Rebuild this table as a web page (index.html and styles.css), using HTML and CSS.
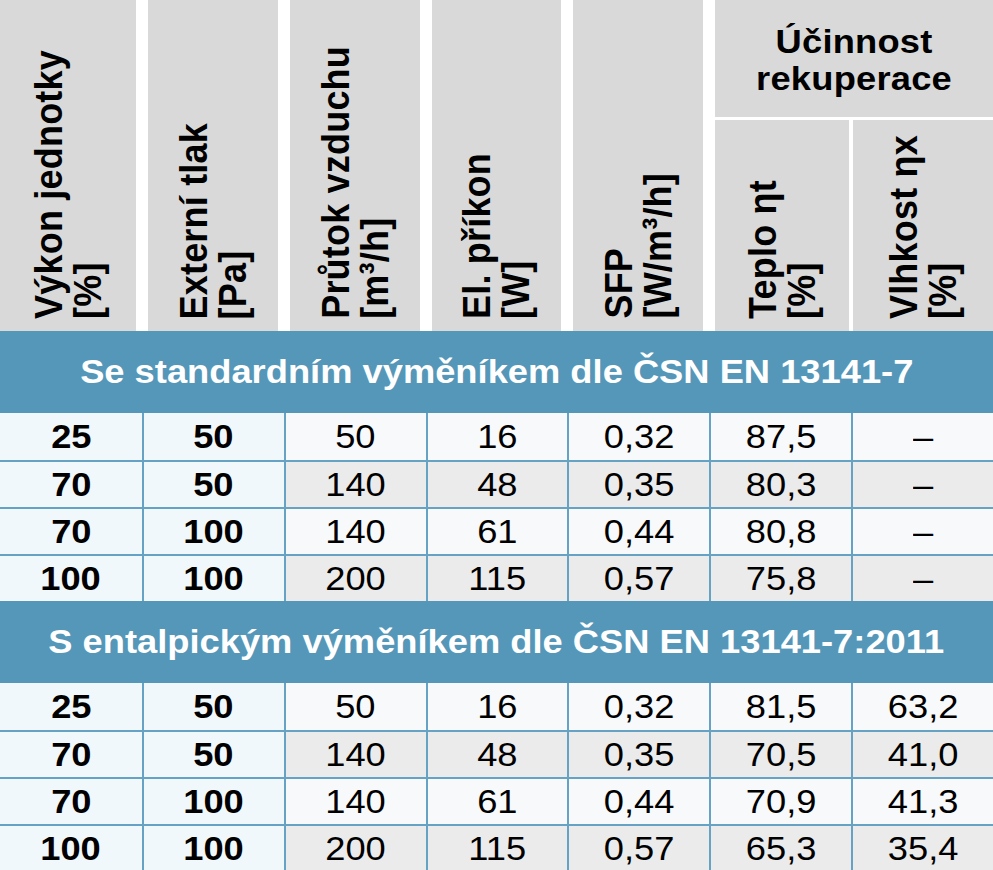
FILE: index.html
```html
<!DOCTYPE html>
<html lang="cs">
<head>
<meta charset="utf-8">
<title>Parametry jednotky</title>
<link rel="stylesheet" href="styles.css">
</head>
<body>
<div class="spec">
  <div class="thead">
    <div class="th th-main c1"><span class="vt">Výkon jednotky<br>[%]</span></div>
    <div class="th th-main c2"><span class="vt">Externí tlak<br>[Pa]</span></div>
    <div class="th th-main c3"><span class="vt">Průtok vzduchu<br>[m³/h]</span></div>
    <div class="th th-main c4"><span class="vt">El. příkon<br>[W]</span></div>
    <div class="th th-main c5"><span class="vt">SFP<br>[W/m³/h]</span></div>
    <div class="th th-group"><span class="ht">Účinnost<br>rekuperace</span></div>
    <div class="th th-sub th-sub-a"><span class="vt">Teplo ηt<br>[%]</span></div>
    <div class="th th-sub th-sub-b"><span class="vt">Vlhkost ηx<br>[%]</span></div>
  </div>

  <div class="band"><span class="t">Se standardním výměníkem dle ČSN EN 13141-7</span></div>
  <div class="row odd">
    <div class="c key"><span class="t">25</span></div><div class="c key"><span class="t">50</span></div>
    <div class="c val"><span class="t">50</span></div><div class="c val"><span class="t">16</span></div>
    <div class="c val"><span class="t">0,32</span></div><div class="c val"><span class="t">87,5</span></div>
    <div class="c val"><span class="t">–</span></div>
  </div>
  <div class="row even">
    <div class="c key"><span class="t">70</span></div><div class="c key"><span class="t">50</span></div>
    <div class="c val"><span class="t">140</span></div><div class="c val"><span class="t">48</span></div>
    <div class="c val"><span class="t">0,35</span></div><div class="c val"><span class="t">80,3</span></div>
    <div class="c val"><span class="t">–</span></div>
  </div>
  <div class="row odd">
    <div class="c key"><span class="t">70</span></div><div class="c key"><span class="t">100</span></div>
    <div class="c val"><span class="t">140</span></div><div class="c val"><span class="t">61</span></div>
    <div class="c val"><span class="t">0,44</span></div><div class="c val"><span class="t">80,8</span></div>
    <div class="c val"><span class="t">–</span></div>
  </div>
  <div class="row even">
    <div class="c key"><span class="t">100</span></div><div class="c key"><span class="t">100</span></div>
    <div class="c val"><span class="t">200</span></div><div class="c val"><span class="t">115</span></div>
    <div class="c val"><span class="t">0,57</span></div><div class="c val"><span class="t">75,8</span></div>
    <div class="c val"><span class="t">–</span></div>
  </div>

  <div class="band"><span class="t">S entalpickým výměníkem dle ČSN EN 13141-7:2011</span></div>
  <div class="row odd">
    <div class="c key"><span class="t">25</span></div><div class="c key"><span class="t">50</span></div>
    <div class="c val"><span class="t">50</span></div><div class="c val"><span class="t">16</span></div>
    <div class="c val"><span class="t">0,32</span></div><div class="c val"><span class="t">81,5</span></div>
    <div class="c val"><span class="t">63,2</span></div>
  </div>
  <div class="row even">
    <div class="c key"><span class="t">70</span></div><div class="c key"><span class="t">50</span></div>
    <div class="c val"><span class="t">140</span></div><div class="c val"><span class="t">48</span></div>
    <div class="c val"><span class="t">0,35</span></div><div class="c val"><span class="t">70,5</span></div>
    <div class="c val"><span class="t">41,0</span></div>
  </div>
  <div class="row odd">
    <div class="c key"><span class="t">70</span></div><div class="c key"><span class="t">100</span></div>
    <div class="c val"><span class="t">140</span></div><div class="c val"><span class="t">61</span></div>
    <div class="c val"><span class="t">0,44</span></div><div class="c val"><span class="t">70,9</span></div>
    <div class="c val"><span class="t">41,3</span></div>
  </div>
  <div class="row even">
    <div class="c key"><span class="t">100</span></div><div class="c key"><span class="t">100</span></div>
    <div class="c val"><span class="t">200</span></div><div class="c val"><span class="t">115</span></div>
    <div class="c val"><span class="t">0,57</span></div><div class="c val"><span class="t">65,3</span></div>
    <div class="c val"><span class="t">35,4</span></div>
  </div>
</div>
</body>
</html>
```

FILE: styles.css
```css
* { box-sizing: border-box; }

html, body {
  margin: 0;
  padding: 0;
  background: #ffffff;
}

body {
  font-family: "Liberation Sans", Arial, Helvetica, sans-serif;
  color: #000;
  overflow: hidden;
}

.spec {
  width: 993px;
}

/* ---------- header ---------- */
.thead {
  display: grid;
  grid-template-columns: repeat(7, 1fr);
  grid-template-rows: 120px 211px;
  height: 331px;
}

.th {
  background: #d9d9d9;
  border: 0 solid #ffffff;
  display: flex;
  flex-direction: column;
  align-items: center;
}

.th-main {
  grid-row: 1 / 3;
  border-left-width: 6px;
  border-right-width: 6px;
  justify-content: flex-end;
  padding-bottom: 12px;
}
.th-main.c1 { grid-column: 1; border-left-width: 0; }
.th-main.c2 { grid-column: 2; }
.th-main.c3 { grid-column: 3; }
.th-main.c4 { grid-column: 4; }
.th-main.c5 { grid-column: 5; }

.th-group {
  grid-column: 6 / 8;
  grid-row: 1;
  border-left-width: 6px;
  border-bottom-width: 3px;
  justify-content: center;
  padding-top: 2px;
}

.th-sub {
  grid-row: 2;
  justify-content: flex-end;
  padding-bottom: 12px;
}
.th-sub-a {
  grid-column: 6;
  border-left-width: 6px;
  border-right-width: 2px;
}
.th-sub-b {
  grid-column: 7;
  border-left-width: 2px;
}

.vt {
  display: block;
  writing-mode: vertical-rl;
  transform: rotate(180deg) scaleX(1.1);
  white-space: nowrap;
  font-weight: 700;
  font-size: 36px;
  line-height: 35px;
  letter-spacing: 0.2px;
}

.ht {
  display: block;
  text-align: center;
  font-weight: 700;
  font-size: 33px;
  line-height: 37px;
  letter-spacing: 0.2px;
  transform: scaleX(1.1);
}

/* ---------- section bands ---------- */
.band {
  height: 82px;
  background: #5597b8;
  color: #ffffff;
  display: flex;
  align-items: center;
  justify-content: center;
  font-weight: 700;
  font-size: 33px;
}

.t {
  display: inline-block;
  transform: scaleX(1.1);
  white-space: nowrap;
}

/* ---------- body rows ---------- */
.row {
  display: grid;
  grid-template-columns: repeat(7, 1fr);
  height: 47px;
}
.row + .row {
  border-top: 2px solid #66a2c3;
}

.c {
  display: flex;
  align-items: center;
  justify-content: center;
  font-size: 33px;
  line-height: 1;
  border-left: 2px solid #66a2c3;
}
.c:first-child { border-left: 0; }

.c.key {
  font-weight: 700;
  background: #f1f8fb;
}

.c.val {
  font-weight: 400;
}
.row.odd .c.val { background: #f8f9fb; }
.row.even .c.val { background: #ebebeb; }
```
